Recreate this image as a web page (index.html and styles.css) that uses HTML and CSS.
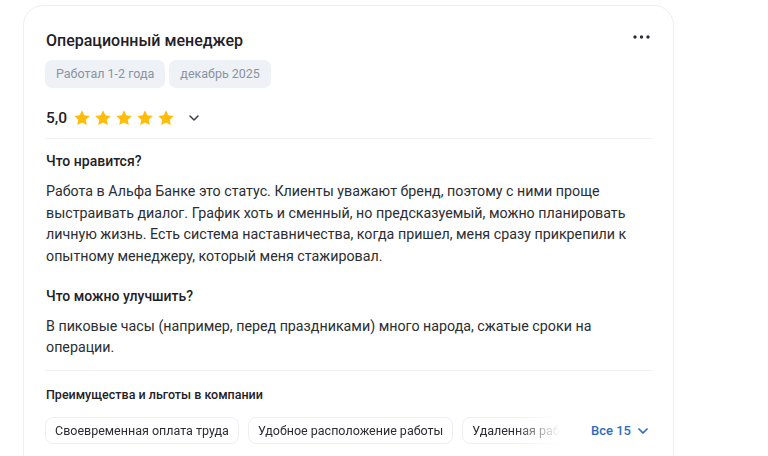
FILE: index.html
```html
<!DOCTYPE html>
<html lang="ru">
<head>
<meta charset="utf-8">
<link rel="stylesheet" href="styles.css">
</head>
<body>
<div class="card">
  <div class="head">
    <div class="title">Операционный менеджер</div>
    <button class="more" aria-label="Ещё">
      <svg width="17" height="4" viewBox="0 0 17 4"><circle cx="2" cy="2" r="1.7"/><circle cx="8.5" cy="2" r="1.7"/><circle cx="15" cy="2" r="1.7"/></svg>
    </button>
  </div>
  <div class="tags">
    <span class="tag">Работал 1-2 года</span>
    <span class="tag">декабрь 2025</span>
  </div>
  <div class="rating">
    <span class="score">5,0</span>
    <span class="stars">
      <svg class="star" viewBox="0 0 24 24"><path d="M12 1.8l3.1 6.6 7.2.9-5.3 5 1.4 7.1L12 17.9l-6.4 3.5 1.4-7.1-5.3-5 7.2-.9z"/></svg>
      <svg class="star" viewBox="0 0 24 24"><path d="M12 1.8l3.1 6.6 7.2.9-5.3 5 1.4 7.1L12 17.9l-6.4 3.5 1.4-7.1-5.3-5 7.2-.9z"/></svg>
      <svg class="star" viewBox="0 0 24 24"><path d="M12 1.8l3.1 6.6 7.2.9-5.3 5 1.4 7.1L12 17.9l-6.4 3.5 1.4-7.1-5.3-5 7.2-.9z"/></svg>
      <svg class="star" viewBox="0 0 24 24"><path d="M12 1.8l3.1 6.6 7.2.9-5.3 5 1.4 7.1L12 17.9l-6.4 3.5 1.4-7.1-5.3-5 7.2-.9z"/></svg>
      <svg class="star" viewBox="0 0 24 24"><path d="M12 1.8l3.1 6.6 7.2.9-5.3 5 1.4 7.1L12 17.9l-6.4 3.5 1.4-7.1-5.3-5 7.2-.9z"/></svg>
    </span>
    <svg class="chev" width="10" height="6" viewBox="0 0 10 6"><path d="M1 1l4 4 4-4" fill="none" stroke="#3a3f48" stroke-width="1.5" stroke-linecap="round" stroke-linejoin="round"/></svg>
  </div>
  <div class="divider"></div>
  <div class="section">
    <div class="sec-title">Что нравится?</div>
    <p class="sec-text">Работа в Альфа Банке это статус. Клиенты уважают бренд, поэтому с ними проще выстраивать диалог. График хоть и сменный, но предсказуемый, можно планировать личную жизнь. Есть система наставничества, когда пришел, меня сразу прикрепили к опытному менеджеру, который меня стажировал.</p>
  </div>
  <div class="section">
    <div class="sec-title">Что можно улучшить?</div>
    <p class="sec-text">В пиковые часы (например, перед праздниками) много народа, сжатые сроки на операции.</p>
  </div>
  <div class="divider div2"></div>
  <div class="benefits">
    <div class="ben-title">Преимущества и льготы в компании</div>
    <div class="ben-row">
      <div class="chips">
        <span class="chip">Своевременная оплата труда</span>
        <span class="chip">Удобное расположение работы</span>
        <span class="chip">Удаленная работа</span>
      </div>
      <button class="all">Все 15
        <svg width="10" height="6" viewBox="0 0 10 6"><path d="M1 1l4 4 4-4" fill="none" stroke="#2f6bc0" stroke-width="1.7" stroke-linecap="round" stroke-linejoin="round"/></svg>
      </button>
    </div>
  </div>
</div>
</body>
</html>
```

FILE: styles.css
```css
* { box-sizing: border-box; }
html, body { margin: 0; padding: 0; background: #ffffff; }
body {
  font-family: Roboto, "Noto Sans", Arial, sans-serif;
  color: #2b2d33;
  padding: 5px 0 0 23px;
  overflow: hidden;
  height: 456px;
}
.card {
  width: 651px;
  height: 480px;
  border: 1px solid #eceef2;
  border-radius: 20px;
  padding: 22.5px 20px 0 21px;
  background: #fff;
}
.head {
  display: flex;
  justify-content: space-between;
  align-items: flex-start;
}
.title {
  font-size: 16px;
  font-weight: 500;
  color: #1f2126;
  line-height: 24px;
  padding-left: 1px;
}
.more {
  border: 0;
  background: none;
  padding: 0;
  margin-top: 6.5px;
  margin-right: 3px;
  display: flex;
  fill: #2b2f38;
}
.tags {
  display: flex;
  gap: 4px;
  margin-top: 7.5px;
}
.tag {
  background: #eef1f6;
  color: #8a93a2;
  font-size: 12.5px;
  height: 28px;
  line-height: 28px;
  padding: 0 11px;
  border-radius: 7px;
}
.rating {
  display: flex;
  align-items: center;
  margin-top: 17.5px;
  height: 24px;
  padding-left: 1px;
}
.score {
  font-size: 15.5px;
  font-weight: 500;
  color: #1f2126;
  margin-right: 6px;
  line-height: 24px;
}
.stars { display: flex; gap: 3px; margin-top: 1px; }
.star { width: 18px; height: 18px; fill: #ffbd0a; }
.chev { margin-left: 14px; margin-top: 1px; }
.divider {
  height: 1px;
  background: #f0f1f4;
  margin-top: 8.5px;
}
.section { margin-top: 12px; padding-left: 1px; }
.section + .section { margin-top: 18.5px; }
.sec-title {
  font-size: 14px;
  font-weight: 500;
  color: #1f2126;
  line-height: 20px;
}
.sec-text {
  margin: 10px 0 0;
  font-size: 14.25px;
  line-height: 21.6px;
  color: #2b2d33;
}
.div2 { margin-top: 11.4px; }
.benefits { padding-top: 14.7px; }
.ben-title {
  font-size: 12.5px;
  font-weight: 500;
  color: #1f2126;
  line-height: 18px;
  padding-left: 1px;
}
.ben-row {
  display: flex;
  align-items: center;
  margin-top: 13.3px;
}
.chips {
  display: flex;
  gap: 9px;
  width: 515px;
  flex: none;
  overflow: hidden;
  -webkit-mask-image: linear-gradient(to right, #000 470px, transparent 515px);
  mask-image: linear-gradient(to right, #000 470px, transparent 515px);
}
.chip {
  flex: none;
  border: 1px solid #eceef2;
  border-radius: 8px;
  height: 27px;
  line-height: 25px;
  padding: 0 9px;
  font-size: 12.5px;
  color: #2b2d33;
}
.all {
  border: 0;
  background: none;
  padding: 0;
  margin-left: 31px;
  display: flex;
  align-items: center;
  gap: 7px;
  font-family: inherit;
  font-size: 13px;
  font-weight: 500;
  color: #2f6bc0;
}
```
